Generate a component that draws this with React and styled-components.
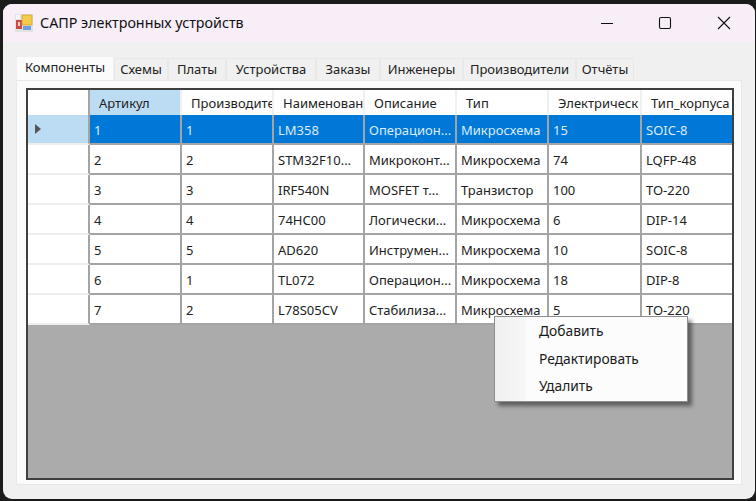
import React from "react";
import styled, { createGlobalStyle } from "styled-components";

const Global = createGlobalStyle`
  html, body { margin: 0; padding: 0; background: #1b1b1b; }
  body { font-family: "Noto Sans", "Open Sans", sans-serif; color: #1a1a1a; }
`;
const Page = styled.div`
  width: 756px; height: 501px; padding: 4px 1px 2px 3px; box-sizing: border-box; overflow: hidden;
`;
const Win = styled.div`
  position: relative; width: 752px; height: 495px; background: #f0f0f0; border-radius: 9px; overflow: hidden;
  display: flex; flex-direction: column;
`;
const TitleBar = styled.div`
  height: 38px; flex: none; background: #f7eef7; display: flex; align-items: center; padding: 0 2px 0 12px;
`;
const Title = styled.div`
  margin-left: 7px; font-size: 14.3px; flex: 1; white-space: nowrap; position: relative; top: -1px; color: #111;
`;
const CtlBtn = styled.div`
  width: 58.5px; height: 38px; display: flex; align-items: center; justify-content: center;
`;
const Body = styled.div`
  flex: 1; padding: 14px 13px 14px 13px; display: flex; flex-direction: column;
`;
const Tabs = styled.div`
  display: flex; height: 24px; flex: none; align-items: flex-end; position: relative; z-index: 1;
`;
const Tab = styled.div`
  width: ${p => p.$w}px; height: ${p => (p.$active ? 24 : 22)}px; box-sizing: border-box;
  background: ${p => (p.$active ? "#fbfbfb" : "#f0f0f0")};
  border: 1px solid ${p => (p.$active ? "#f0f0f0" : "#e8e8e8")}; border-bottom: none;
  font-size: 13px; line-height: ${p => (p.$active ? 20 : 21)}px; text-align: center; white-space: nowrap; color: #222;
`;
const TabPage = styled.div`
  flex: 1; background: #fbfbfb; border: 1px solid #e8e8e8; padding: 7px 4px 4px 9px;
  display: flex;
`;
const Grid = styled.div`
  width: 708px; height: 392px; box-sizing: border-box; background: #ababab; border: 2px solid #3f3f3f; overflow: hidden;
`;
const Row = styled.div`
  display: flex; height: ${p => p.$h}px; background: #fff;
`;
const Cell = styled.div`
  width: ${p => p.$w}px; flex: none; box-sizing: border-box; overflow: hidden; white-space: nowrap;
  display: flex; align-items: center; font-size: 13px;
  padding-left: ${p => (p.$head ? 9 : 4)}px; padding-top: ${p => (p.$head ? 0 : 2)}px;
  border-right: ${p => (p.$last ? 0 : 2)}px solid ${p => (p.$head ? "#f0f0f0" : "#a4a4a4")};
  border-bottom: ${p => (p.$head ? 0 : 2)}px solid #a4a4a4;
  background: ${p => (p.$sel ? "#0078d7" : p.$light ? "#bcdcf4" : "#fff")};
  color: ${p => (p.$sel ? "#dcecfa" : "#222")};
`;
const RowHead = styled.div`
  width: 62px; flex: none; box-sizing: border-box; display: flex; align-items: center; padding-left: 6px;
  background: ${p => (p.$sel ? "#bcdcf4" : "#fff")};
  border-right: 2px solid #a4a4a4; border-bottom: ${p => (p.$top ? 0 : 2)}px solid ${p => (p.$top ? "#fff" : "#eee")};
`;
const Menu = styled.div`
  position: absolute; left: 491px; top: 312px; width: 194px; height: 86px; box-sizing: border-box;
  background: linear-gradient(90deg, #f0f0f0 0, #f6f6f6 30px, #fcfcfc 31px);
  border: 1px solid #8e8e8e; box-shadow: 4px 4px 4px rgba(0,0,0,.45);
  display: flex; flex-direction: column;
`;
const MenuItem = styled.div`
  height: 27.6px; line-height: 27px; padding-left: 44px; font-size: 13.8px; color: #1a1a1a;
`;

const cols = [92, 92, 91, 92, 92, 93, 91];
const heads = ["Артикул", "Производите", "Наименован", "Описание", "Тип", "Электрическ", "Тип_корпуса"];
const rows = [
  ["1", "1", "LM358", "Операцион...", "Микросхема", "15", "SOIC-8"],
  ["2", "2", "STM32F10...", "Микроконт...", "Микросхема", "74", "LQFP-48"],
  ["3", "3", "IRF540N", "MOSFET т...", "Транзистор", "100", "TO-220"],
  ["4", "4", "74HC00", "Логически...", "Микросхема", "6", "DIP-14"],
  ["5", "5", "AD620", "Инструмен...", "Микросхема", "10", "SOIC-8"],
  ["6", "1", "TL072", "Операцион...", "Микросхема", "18", "DIP-8"],
  ["7", "2", "L78S05CV", "Стабилиза...", "Микросхема", "5", "TO-220"],
];
const tabs = [["Компоненты", 98], ["Схемы", 54], ["Платы", 58], ["Устройства", 90], ["Заказы", 64], ["Инженеры", 83], ["Производители", 113], ["Отчёты", 58]];

const AppIcon = () => (
  <svg width="18" height="18" viewBox="0 0 18 18">
    <rect x="0" y="0" width="18" height="18" fill="#e2e2e2" />
    <rect x="1" y="1" width="4" height="4" fill="#f8f8f8" />
    <rect x="1" y="6" width="6" height="9" fill="#cf4a44" />
    <rect x="3" y="8" width="2" height="4" fill="#f4d0c8" />
    <rect x="7" y="1" width="10" height="10" fill="#f4cb4a" stroke="#d0a32c" strokeWidth="0.8" />
    <rect x="8" y="12" width="8" height="4" fill="#6f9fe0" />
  </svg>
);
const Minimize = () => (
  <svg width="14" height="14" viewBox="0 0 14 14"><path d="M1 7.5H13" stroke="#111" strokeWidth="1.1" /></svg>
);
const Maximize = () => (
  <svg width="14" height="14" viewBox="0 0 14 14"><rect x="1.5" y="1.5" width="11" height="11" rx="1.5" fill="none" stroke="#111" strokeWidth="1.1" /></svg>
);
const Close = () => (
  <svg width="14" height="14" viewBox="0 0 14 14"><path d="M1 1L13 13M13 1L1 13" stroke="#111" strokeWidth="1.1" /></svg>
);
const Arrow = () => (
  <svg width="8" height="12" viewBox="0 0 8 12"><path d="M1 1L7 6L1 11Z" fill="#555" /></svg>
);

export default function App() {
  return (
    <Page>
      <Global />
      <Win>
        <TitleBar>
          <AppIcon />
          <Title>САПР электронных устройств</Title>
          <CtlBtn><Minimize /></CtlBtn>
          <CtlBtn><Maximize /></CtlBtn>
          <CtlBtn><Close /></CtlBtn>
        </TitleBar>
        <Body>
          <Tabs>
            {tabs.map(([t, w], i) => <Tab key={t} $w={w} $active={i === 0}>{t}</Tab>)}
          </Tabs>
          <TabPage>
            <Grid>
              <Row $h={25}>
                <RowHead $top />
                {heads.map((h, i) => (
                  <Cell key={h} $w={cols[i]} $head $light={i === 0} $last={i === 6}>{h}</Cell>
                ))}
              </Row>
              {rows.map((r, ri) => (
                <Row key={ri} $h={30}>
                  <RowHead $sel={ri === 0}>{ri === 0 && <Arrow />}</RowHead>
                  {r.map((c, i) => (
                    <Cell key={i} $w={cols[i]} $sel={ri === 0} $last={i === 6}>{c}</Cell>
                  ))}
                </Row>
              ))}
            </Grid>
          </TabPage>
        </Body>
        <Menu>
          <MenuItem>Добавить</MenuItem>
          <MenuItem>Редактировать</MenuItem>
          <MenuItem>Удалить</MenuItem>
        </Menu>
      </Win>
    </Page>
  );
}
